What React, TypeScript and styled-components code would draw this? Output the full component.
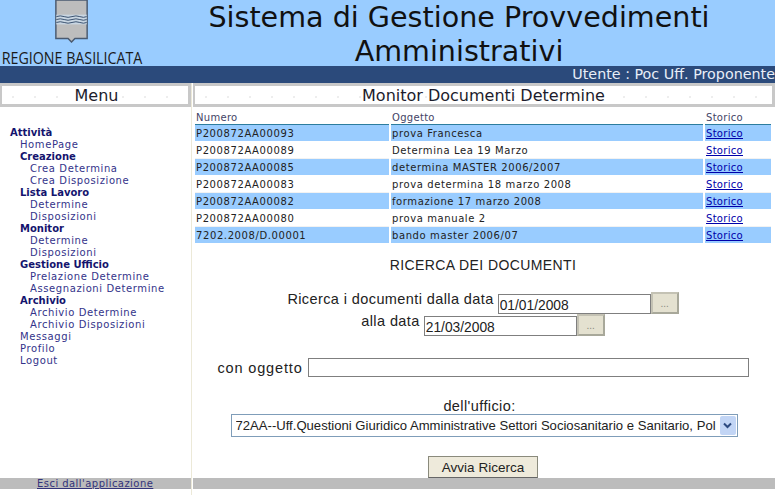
import React from 'react';
import styled, { createGlobalStyle } from 'styled-components';

const GlobalStyle = createGlobalStyle`
  html, body { margin: 0; padding: 0; background: #fff; }
  body { font-family: "DejaVu Sans", Verdana, sans-serif; color: #222; }
`;

const Page = styled.div`
  width: 775px;
  height: 495px;
  overflow: hidden;
  display: flex;
  flex-direction: column;
`;

const Header = styled.header`
  height: 66px;
  background: #99ccff;
  display: flex;
`;

const LogoBox = styled.div`
  width: 144px;
  flex: none;
  display: flex;
  flex-direction: column;
  align-items: center;
`;

const LogoText = styled.div`
  font-family: "Open Sans", "Liberation Sans", sans-serif;
  font-size: 16px;
  line-height: 16px;
  margin-top: 7px;
  color: #1a1a1a;
  white-space: nowrap;
  transform: scaleX(0.89);
  transform-origin: center;
`;

const Title = styled.h1`
  flex: 1;
  margin: 0;
  padding: 0 1px 0 0;
  text-align: center;
  font-weight: normal;
  font-size: 28.6px;
  line-height: 34px;
  color: #111;
`;

const UserBar = styled.div`
  height: 17px;
  background: #2b4a7b;
  color: #e8eef8;
  font-size: 14.3px;
  line-height: 17px;
  text-align: right;
  white-space: nowrap;
`;

const Columns = styled.div`
  flex: 1;
  display: grid;
  grid-template-columns: 192px 1fr;
  min-height: 0;
`;

const Side = styled.aside`
  display: flex;
  flex-direction: column;
  border-right: 1px solid #ece9d8;
`;

const Main = styled.main`
  display: flex;
  flex-direction: column;
  padding-left: 1px;
  min-width: 0;
`;

const PanelTitle = styled.div<{ $inset?: number }>`
  height: 18px;
  border: 3px solid #c8c8c8;
  border-left-width: 2px;
  padding-left: ${(p) => p.$inset ?? 0}px;
  background: radial-gradient(circle, #d8d8d8 0.6px, transparent 0.8px) 0 5px / 22px 12px #fff;
  font-size: 16px;
  line-height: 20px;
  text-align: center;
  color: #1c1c2c;
`;

const Nav = styled.nav`
  padding-top: 20px;
  flex: 1;
`;

const NavItem = styled.a<{ $level: number; $bold?: boolean }>`
  display: block;
  height: 12px;
  font-size: 10px;
  line-height: 12px;
  letter-spacing: ${(p) => (p.$bold ? '0' : '0.6px')};
  padding-left: ${(p) => 10 + p.$level * 10}px;
  font-weight: ${(p) => (p.$bold ? 'bold' : 'normal')};
  color: ${(p) => (p.$bold ? '#14146e' : '#33338a')};
  white-space: nowrap;
`;

const FooterBar = styled.div`
  height: 11px;
  margin-bottom: 6px;
  background: #bcbcbc;
  font-size: 10px;
  line-height: 11px;
  letter-spacing: 0.45px;
  padding-left: 37px;
  white-space: nowrap;
`;

const ExitLink = styled.a`
  color: #33337a;
  text-decoration: underline;
`;

const Table = styled.table`
  width: 577px;
  margin: 4px 0 0 2px;
  border-collapse: collapse;
  table-layout: fixed;
  font-size: 10px;
`;

const HeadCell = styled.th`
  font-weight: normal;
  text-align: left;
  color: #444466;
  height: 13px;
  line-height: 13px;
  padding: 0 0 0 1px;
  letter-spacing: 0.3px;
  border-bottom: 1px solid #2d7d9e;
  border-right: 2px solid #fff;
`;

const Row = styled.tr`
  height: 17px;
`;

const Cell = styled.td<{ $odd: boolean }>`
  padding: 0 0 0 1px;
  height: 15px;
  line-height: 15px;
  white-space: nowrap;
  color: #222;
  letter-spacing: 0.6px;
  background: ${(p) => (p.$odd ? '#99ccff' : '#fff')};
  border-top: 1px solid #fff;
  border-bottom: 1px solid ${(p) => (p.$odd ? '#fff' : '#f2f2f2')};
  border-right: 2px solid #fff;
  background-clip: padding-box;
`;

const StoricoLink = styled.a`
  color: #0000aa;
  letter-spacing: 0.3px;
  text-decoration: underline;
`;

const SearchForm = styled.form`
  flex: 1;
  display: flex;
  flex-direction: column;
  align-items: center;
  font-size: 14.5px;
  font-family: "Liberation Sans", Arial, sans-serif;
  color: #222;
  letter-spacing: 0.4px;
`;

const SearchTitle = styled.div`
  font-size: 14px;
  line-height: 16px;
  margin-top: 13px;
  margin-left: -2px;
`;

const FieldRow = styled.div<{ $top: number }>`
  display: flex;
  align-items: center;
  gap: 4px;
  margin-top: ${(p) => p.$top}px;
  margin-left: -2px;
`;

const FieldLabel = styled.span<{ $lift?: number; $spacing?: number }>`
  line-height: 14px;
  margin-bottom: ${(p) => p.$lift ?? 0}px;
  letter-spacing: ${(p) => p.$spacing ?? 0.4}px;
`;

const DateInput = styled.input`
  box-sizing: border-box;
  width: 153px;
  height: 20px;
  margin-top: 2px;
  border: 1px solid #7f7f7f;
  padding: 2px 1px 0;
  font: 13.8px "Liberation Sans", Arial, sans-serif;
  color: #222;
  background: #fff;
`;

const PickerButton = styled.button`
  box-sizing: border-box;
  width: 28px;
  height: 22px;
  margin-left: -4px;
  border: 2px solid #a8a89a;
  border-top-color: #c4c2b4;
  border-left-color: #c4c2b4;
  background: #e4e1d0;
  color: #8a8a80;
  font: 10px "Liberation Sans", Arial, sans-serif;
  padding: 0;
`;

const WideInput = styled.input`
  box-sizing: border-box;
  width: 441px;
  height: 19px;
  margin-left: 1px;
  border: 1px solid #7f7f7f;
  background: #fff;
`;

const OfficeLabel = styled.div`
  line-height: 16px;
  margin-top: 21px;
  margin-left: -9px;
`;

const SelectBox = styled.div`
  box-sizing: border-box;
  width: 507px;
  height: 23px;
  border: 1px solid #7f9db9;
  background: #fff;
  display: flex;
  align-items: center;
  padding: 0 1px 0 4px;
  font-size: 13.1px;
  color: #222;
  letter-spacing: 0;
  white-space: nowrap;
`;

const SelectText = styled.span`
  flex: 1;
  overflow: hidden;
`;

const SelectArrow = styled.span`
  flex: none;
  width: 16px;
  height: 19px;
  background: #c2d5f5;
  border-radius: 2px;
  display: flex;
  align-items: center;
  justify-content: center;
`;

const SubmitButton = styled.button`
  box-sizing: border-box;
  width: 110px;
  height: 22px;
  margin-top: 19px;
  margin-left: -2px;
  border: 1px solid #8a8a7c;
  border-bottom-color: #666;
  background: #eeeadb;
  color: #222;
  font: 13.5px "Liberation Sans", Arial, sans-serif;
  padding: 0;
`;

// stemma della regione: scudo grigio con le onde
function Crest() {
  return (
    <svg width="36" height="44" viewBox="0 0 36 44" style={{ display: 'block' }}>
      <path d="M1.500 0V39.500H14L17.500 43L21 39.500H33.500V0Z" fill="#bdbdbd" stroke="#4a5a70" strokeWidth="1.500" />
      <path d="M2 15H33V25H2Z" fill="#c9d6e2" />
      <path
        d="M2 17q4-1.500 8 0t8 0t8 0t7 0M2 20q4-1.500 8 0t8 0t8 0t7 0M2 23q4-1.500 8 0t8 0t8 0t7 0"
        fill="none"
        stroke="#39506e"
        strokeWidth="1"
      />
    </svg>
  );
}

const menu: [string, number, boolean][] = [
  ['Attività', 0, true],
  ['HomePage', 1, false],
  ['Creazione', 1, true],
  ['Crea Determina', 2, false],
  ['Crea Disposizione', 2, false],
  ['Lista Lavoro', 1, true],
  ['Determine', 2, false],
  ['Disposizioni', 2, false],
  ['Monitor', 1, true],
  ['Determine', 2, false],
  ['Disposizioni', 2, false],
  ['Gestione Ufficio', 1, true],
  ['Prelazione Determine', 2, false],
  ['Assegnazioni Determine', 2, false],
  ['Archivio', 1, true],
  ['Archivio Determine', 2, false],
  ['Archivio Disposizioni', 2, false],
  ['Messaggi', 1, false],
  ['Profilo', 1, false],
  ['Logout', 1, false],
];

const docs = [
  ['P200872AA00093', 'prova Francesca'],
  ['P200872AA00089', 'Determina Lea 19 Marzo'],
  ['P200872AA00085', 'determina MASTER 2006/2007'],
  ['P200872AA00083', 'prova determina 18 marzo 2008'],
  ['P200872AA00082', 'formazione 17 marzo 2008'],
  ['P200872AA00080', 'prova manuale 2'],
  ['7202.2008/D.00001', 'bando master 2006/07'],
];

export default function App() {
  return (
    <Page>
      <GlobalStyle />
      <Header>
        <LogoBox>
          <Crest />
          <LogoText>REGIONE BASILICATA</LogoText>
        </LogoBox>
        <Title>Sistema di Gestione Provvedimenti Amministrativi</Title>
      </Header>
      <UserBar>Utente : Poc Uff. Proponente</UserBar>
      <Columns>
        <Side>
          <PanelTitle $inset={3}>Menu</PanelTitle>
          <Nav>
            {menu.map(([label, level, bold], i) => (
              <NavItem key={i} $level={level} $bold={bold}>
                {label}
              </NavItem>
            ))}
          </Nav>
          <FooterBar>
            <ExitLink>Esci dall'applicazione</ExitLink>
          </FooterBar>
        </Side>
        <Main>
          <PanelTitle>Monitor Documenti Determine</PanelTitle>
          <Table>
            <colgroup>
              <col width="195" />
              <col width="314" />
              <col width="68" />
            </colgroup>
            <thead>
              <tr>
                <HeadCell>Numero</HeadCell>
                <HeadCell>Oggetto</HeadCell>
                <HeadCell>Storico</HeadCell>
              </tr>
            </thead>
            <tbody>
              {docs.map(([numero, oggetto], i) => (
                <Row key={numero}>
                  <Cell $odd={i % 2 === 0}>{numero}</Cell>
                  <Cell $odd={i % 2 === 0}>{oggetto}</Cell>
                  <Cell $odd={i % 2 === 0}>
                    <StoricoLink>Storico</StoricoLink>
                  </Cell>
                </Row>
              ))}
            </tbody>
          </Table>
          <SearchForm>
            <SearchTitle>RICERCA DEI DOCUMENTI</SearchTitle>
            <FieldRow $top={19}>
              <FieldLabel $lift={8}>Ricerca i documenti dalla data</FieldLabel>
              <DateInput defaultValue="01/01/2008" />
              <PickerButton type="button">...</PickerButton>
            </FieldRow>
            <FieldRow $top={0}>
              <FieldLabel $lift={8}>alla data</FieldLabel>
              <DateInput defaultValue="21/03/2008" />
              <PickerButton type="button">...</PickerButton>
            </FieldRow>
            <FieldRow $top={22}>
              <FieldLabel $spacing={0.85}>con oggetto</FieldLabel>
              <WideInput />
            </FieldRow>
            <OfficeLabel>dell'ufficio:</OfficeLabel>
            <SelectBox>
              <SelectText>72AA--Uff.Questioni Giuridico Amministrative Settori Sociosanitario e Sanitario, Pol</SelectText>
              <SelectArrow>
                <svg width="9" height="7" viewBox="0 0 9 7">
                  <path d="M1 1.500L4.500 5L8 1.500" fill="none" stroke="#2d4a80" strokeWidth="2" />
                </svg>
              </SelectArrow>
            </SelectBox>
            <SubmitButton type="button">Avvia Ricerca</SubmitButton>
          </SearchForm>
          <FooterBar />
        </Main>
      </Columns>
    </Page>
  );
}
